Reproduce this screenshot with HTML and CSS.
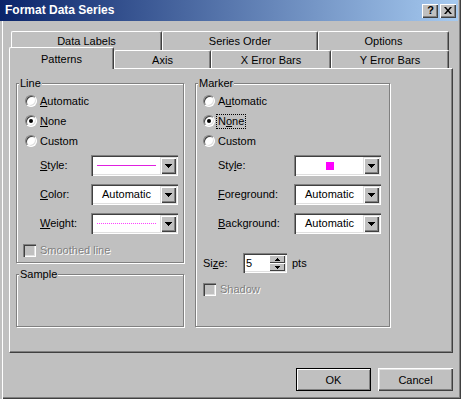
FILE: index.html
```html
<!DOCTYPE html>

<html>
    <head>
        <meta charset=UTF-8>
        <title>Format Data Series</title>
        <link rel="stylesheet" href="styles.css">
    </head>

    <body>
        <div id="window">
            <!-- タイトルバー -->
            <div id="titlebar">
                <span class="caption">Format Data Series</span>
                <div class="caption-buttons">
                    <span class="cbtn help">?</span>
                    <span class="cbtn">
                        <svg width="8" height="7" viewBox="0 0 8 7"><path d="M0 0h2l2 2.4 2-2.4h2l-3 3.5 3 3.5h-2l-2-2.4-2 2.4h-2l3-3.5z" fill="#000"/></svg>
                    </span>
                </div>
            </div>

            <!-- タブ -->
            <div id="tabs">
                <div class="tabrow back">
                    <div class="tab w-labels">Data Labels</div>
                    <div class="tab w-order">Series Order</div>
                    <div class="tab w-options">Options</div>
                </div>
                <div class="tabrow front">
                    <div class="tab w-patterns selected">Patterns</div>
                    <div class="tab w-axis">Axis</div>
                    <div class="tab w-xerr">X Error Bars</div>
                    <div class="tab w-yerr">Y Error Bars</div>
                </div>
            </div>

            <div id="panel">
                <div class="column">
                    <fieldset class="group line-group">
                        <legend>Line</legend>
                        <div class="option first"><span class="radio"></span><span><u>A</u>utomatic</span></div>
                        <div class="option"><span class="radio on"></span><span><u>N</u>one</span></div>
                        <div class="option"><span class="radio"></span><span>Custom</span></div>

                        <div class="field first">
                            <label><u>S</u>tyle:</label>
                            <div class="combo">
                                <div class="value"><div class="solid-line"></div></div>
                                <div class="drop"><svg width="7" height="4" viewBox="0 0 7 4"><path d="M0 0h7v1h-1v1h-1v1h-1v1h-1v-1h-1v-1h-1v-1h-1z" fill="#000"/></svg></div>
                            </div>
                        </div>
                        <div class="field">
                            <label><u>C</u>olor:</label>
                            <div class="combo">
                                <div class="value">Automatic</div>
                                <div class="drop"><svg width="7" height="4" viewBox="0 0 7 4"><path d="M0 0h7v1h-1v1h-1v1h-1v1h-1v-1h-1v-1h-1v-1h-1z" fill="#000"/></svg></div>
                            </div>
                        </div>
                        <div class="field">
                            <label><u>W</u>eight:</label>
                            <div class="combo">
                                <div class="value"><div class="dotted-line"></div></div>
                                <div class="drop"><svg width="7" height="4" viewBox="0 0 7 4"><path d="M0 0h7v1h-1v1h-1v1h-1v1h-1v-1h-1v-1h-1v-1h-1z" fill="#000"/></svg></div>
                            </div>
                        </div>

                        <div class="check"><span class="checkbox"></span><span class="disabled">Smoothed line</span></div>
                    </fieldset>

                    <fieldset class="group sample-group">
                        <legend>Sample</legend>
                    </fieldset>
                </div>

                <fieldset class="group marker-group">
                    <legend>Marker</legend>
                    <div class="option first"><span class="radio"></span><span>A<u>u</u>tomatic</span></div>
                    <div class="option"><span class="radio on"></span><span class="focus">N<u>o</u>ne</span></div>
                    <div class="option"><span class="radio"></span><span>Custom</span></div>

                    <div class="field first">
                        <label>Sty<u>l</u>e:</label>
                        <div class="combo">
                            <div class="value"><div class="marker-square"></div></div>
                            <div class="drop"><svg width="7" height="4" viewBox="0 0 7 4"><path d="M0 0h7v1h-1v1h-1v1h-1v1h-1v-1h-1v-1h-1v-1h-1z" fill="#000"/></svg></div>
                        </div>
                    </div>
                    <div class="field">
                        <label><u>F</u>oreground:</label>
                        <div class="combo">
                            <div class="value">Automatic</div>
                            <div class="drop"><svg width="7" height="4" viewBox="0 0 7 4"><path d="M0 0h7v1h-1v1h-1v1h-1v1h-1v-1h-1v-1h-1v-1h-1z" fill="#000"/></svg></div>
                        </div>
                    </div>
                    <div class="field">
                        <label><u>B</u>ackground:</label>
                        <div class="combo">
                            <div class="value">Automatic</div>
                            <div class="drop"><svg width="7" height="4" viewBox="0 0 7 4"><path d="M0 0h7v1h-1v1h-1v1h-1v1h-1v-1h-1v-1h-1v-1h-1z" fill="#000"/></svg></div>
                        </div>
                    </div>

                    <div class="size-row">
                        <label>Si<u>z</u>e:</label>
                        <div class="spin">
                            <div class="spin-value">5</div>
                            <div class="spin-buttons">
                                <div class="spin-btn"><svg width="5" height="3" viewBox="0 0 5 3"><path d="M2 0h1v1h1v1h1v1h-5v-1h1v-1h1z" fill="#000"/></svg></div>
                                <div class="spin-btn"><svg width="5" height="3" viewBox="0 0 5 3"><path d="M0 0h5v1h-1v1h-1v1h-1v-1h-1v-1h-1z" fill="#000"/></svg></div>
                            </div>
                        </div>
                        <span class="unit">pts</span>
                    </div>

                    <div class="check"><span class="checkbox"></span><span class="disabled">Shadow</span></div>
                </fieldset>
            </div>

            <div class="buttons">
                <button class="btn default">OK</button>
                <button class="btn">Cancel</button>
            </div>
        </div>
    </body>
</html>
```

FILE: styles.css
```css
* {
    box-sizing: border-box;
}

body {
    margin: 0;
    background: #c0c0c0;
    font-family: "Liberation Sans", Arial, sans-serif;
    font-size: 11px;
    line-height: 13px;
    color: #000;
}

#window {
    width: 461px;
    height: 399px;
    background: #c0c0c0;
    box-shadow: inset 2px 0 #c0c0c0, inset 3px 0 #fff,
                inset -1px -1px #404040, inset -2px -2px #808080;
    overflow: hidden;
}

/* タイトルバー */
#titlebar {
    height: 21px;
    margin-right: 3px;
    padding: 0 2px 0 5px;
    display: flex;
    align-items: center;
    justify-content: space-between;
    background: linear-gradient(to right, #0a246a, #a6caf0);
}

.caption {
    color: #fff;
    font-size: 12px;
    font-weight: bold;
}

.caption-buttons {
    display: flex;
    gap: 2px;
}

.cbtn {
    width: 16px;
    height: 14px;
    display: flex;
    align-items: center;
    justify-content: center;
    background: #c0c0c0;
    box-shadow: inset 1px 1px #fff, inset -1px -1px #404040, inset -2px -2px #808080;
}

.cbtn.help {
    font-weight: bold;
    font-size: 11px;
    padding-left: 1px;
}

/* タブ */
#tabs {
    padding-top: 10px;
}

.tabrow {
    display: flex;
}

.tabrow.back {
    margin-left: 11px;
    height: 19px;
}

.tabrow.front {
    margin-left: 9px;
    height: 18px;
    align-items: flex-end;
    position: relative;
    z-index: 1;
}

.tab {
    height: 100%;
    display: flex;
    align-items: center;
    justify-content: center;
    background: #c0c0c0;
    border-top: 1px solid #fff;
    border-left: 1px solid #fff;
    border-right: 1px solid #404040;
    border-top-left-radius: 2px;
    border-top-right-radius: 2px;
    box-shadow: inset -1px 0 #808080;
}

.front .tab {
    padding-top: 2px;
}

.front .tab.selected {
    height: 22px;
    margin-bottom: -1px;
    padding-top: 2px;
    padding-bottom: 1px;
}

.w-labels  { width: 151px; }
.w-order   { width: 156px; }
.w-options { width: 131px; }
.w-patterns { width: 105px; }
.w-axis    { width: 97px; }
.w-xerr    { width: 120px; }
.w-yerr    { width: 118px; }

/* パネル */
#panel {
    margin-left: 9px;
    width: 444px;
    height: 285px;
    display: flex;
    align-items: flex-start;
    gap: 11px;
    padding: 8px 0 0 6px;
    border-top: 1px solid #fff;
    border-left: 1px solid #fff;
    border-right: 1px solid #404040;
    border-bottom: 1px solid #404040;
    box-shadow: inset -1px -1px #808080;
}

.column {
    display: flex;
    flex-direction: column;
    gap: 5px;
}

.group {
    margin: 0;
    padding: 0;
    min-width: 0;
    border: 1px solid #808080;
    box-shadow: inset 1px 1px #fff, 1px 1px #fff;
}

.group legend {
    margin-left: 2px;
    padding: 0 1px;
    line-height: 13px;
    background: #c0c0c0;
}

.line-group {
    width: 168px;
    padding-bottom: 4px;
}

.sample-group {
    width: 168px;
    height: 59px;
}

.marker-group {
    width: 195px;
    padding-bottom: 29px;
}

/* ラジオボタン */
.option {
    height: 20px;
    display: flex;
    align-items: center;
    padding-left: 8px;
}

.option.first {
    margin-top: 1px;
}

.marker-group .option {
    padding-left: 7px;
}

.radio {
    flex: none;
    position: relative;
    width: 12px;
    height: 12px;
    margin-right: 3px;
    border-radius: 50%;
    background: #fff;
    border: 1px solid;
    border-color: #808080 #fff #fff #808080;
    box-shadow: inset 1px 1px #404040, inset -1px -1px #dfdfdf;
}

.radio.on::after {
    content: "";
    position: absolute;
    left: 3px;
    top: 3px;
    width: 4px;
    height: 4px;
    border-radius: 50%;
    background: #000;
}

.focus {
    margin-left: -2px;
    padding: 0 1px;
    border: 1px dotted #000;
}

/* コンボボックス */
.field {
    height: 21px;
    margin-top: 8px;
    display: flex;
    align-items: center;
    padding-left: 23px;
}

.field.first {
    margin-top: 4px;
}

.field label {
    width: 51px;
}

.marker-group .field {
    padding-left: 22px;
}

.marker-group .field label {
    width: 76px;
}

.combo {
    width: 87px;
    height: 21px;
    display: flex;
    padding: 2px;
    background: #fff;
    box-shadow: inset 1px 1px #808080, inset 2px 2px #404040,
                inset -1px -1px #fff, inset -2px -2px #dfdfdf;
}

.combo .value {
    flex: 1;
    display: flex;
    align-items: center;
    justify-content: center;
    padding: 0 4px;
}

.drop {
    width: 16px;
    height: 17px;
    display: flex;
    align-items: center;
    justify-content: center;
    background: #c0c0c0;
    box-shadow: inset 1px 1px #dfdfdf, inset 2px 2px #fff,
                inset -1px -1px #404040, inset -2px -2px #808080;
}

.solid-line {
    width: 100%;
    border-top: 1px solid #e020e0;
}

.dotted-line {
    width: 100%;
    border-top: 1px dotted #ff40ff;
}

.marker-square {
    width: 8px;
    height: 8px;
    background: #ff00ff;
}

/* チェックボックス */
.check {
    height: 15px;
    margin-top: 9px;
    display: flex;
    align-items: center;
    padding-left: 6px;
}

.marker-group .check {
    padding-left: 7px;
}

.checkbox {
    flex: none;
    width: 13px;
    height: 13px;
    margin-right: 4px;
    background: #c0c0c0;
    box-shadow: inset 1px 1px #808080, inset 2px 2px #404040,
                inset -1px -1px #fff, inset -2px -2px #dfdfdf;
}

.disabled {
    color: #808080;
    text-shadow: 1px 1px #fff;
}

/* サイズ */
.size-row {
    height: 20px;
    margin-top: 19px;
    display: flex;
    align-items: center;
    padding-left: 7px;
}

.size-row label {
    width: 40px;
}

.spin {
    width: 44px;
    height: 20px;
    display: flex;
    padding: 2px;
    background: #fff;
    box-shadow: inset 1px 1px #808080, inset 2px 2px #404040,
                inset -1px -1px #fff, inset -2px -2px #dfdfdf;
}

.spin-value {
    flex: 1;
    padding-left: 1px;
    display: flex;
    align-items: center;
}

.spin-buttons {
    width: 16px;
    display: flex;
    flex-direction: column;
}

.spin-btn {
    flex: 1;
    display: flex;
    align-items: center;
    justify-content: center;
    background: #c0c0c0;
    box-shadow: inset 1px 1px #fff, inset -1px -1px #404040;
}

.unit {
    margin-left: 5px;
}

/* ボタン */
.buttons {
    display: flex;
    justify-content: flex-end;
    gap: 7px;
    margin-top: 15px;
    padding-right: 8px;
}

.btn {
    width: 75px;
    height: 23px;
    padding: 0;
    font-family: inherit;
    font-size: 11px;
    color: #000;
    background: #c0c0c0;
    border: none;
    box-shadow: inset 1px 1px #fff, inset -1px -1px #404040,
                inset -2px -2px #808080, inset 2px 2px #dfdfdf;
}

.btn.default {
    border: 1px solid #000;
    box-shadow: inset 1px 1px #fff, inset -1px -1px #808080;
}
```
